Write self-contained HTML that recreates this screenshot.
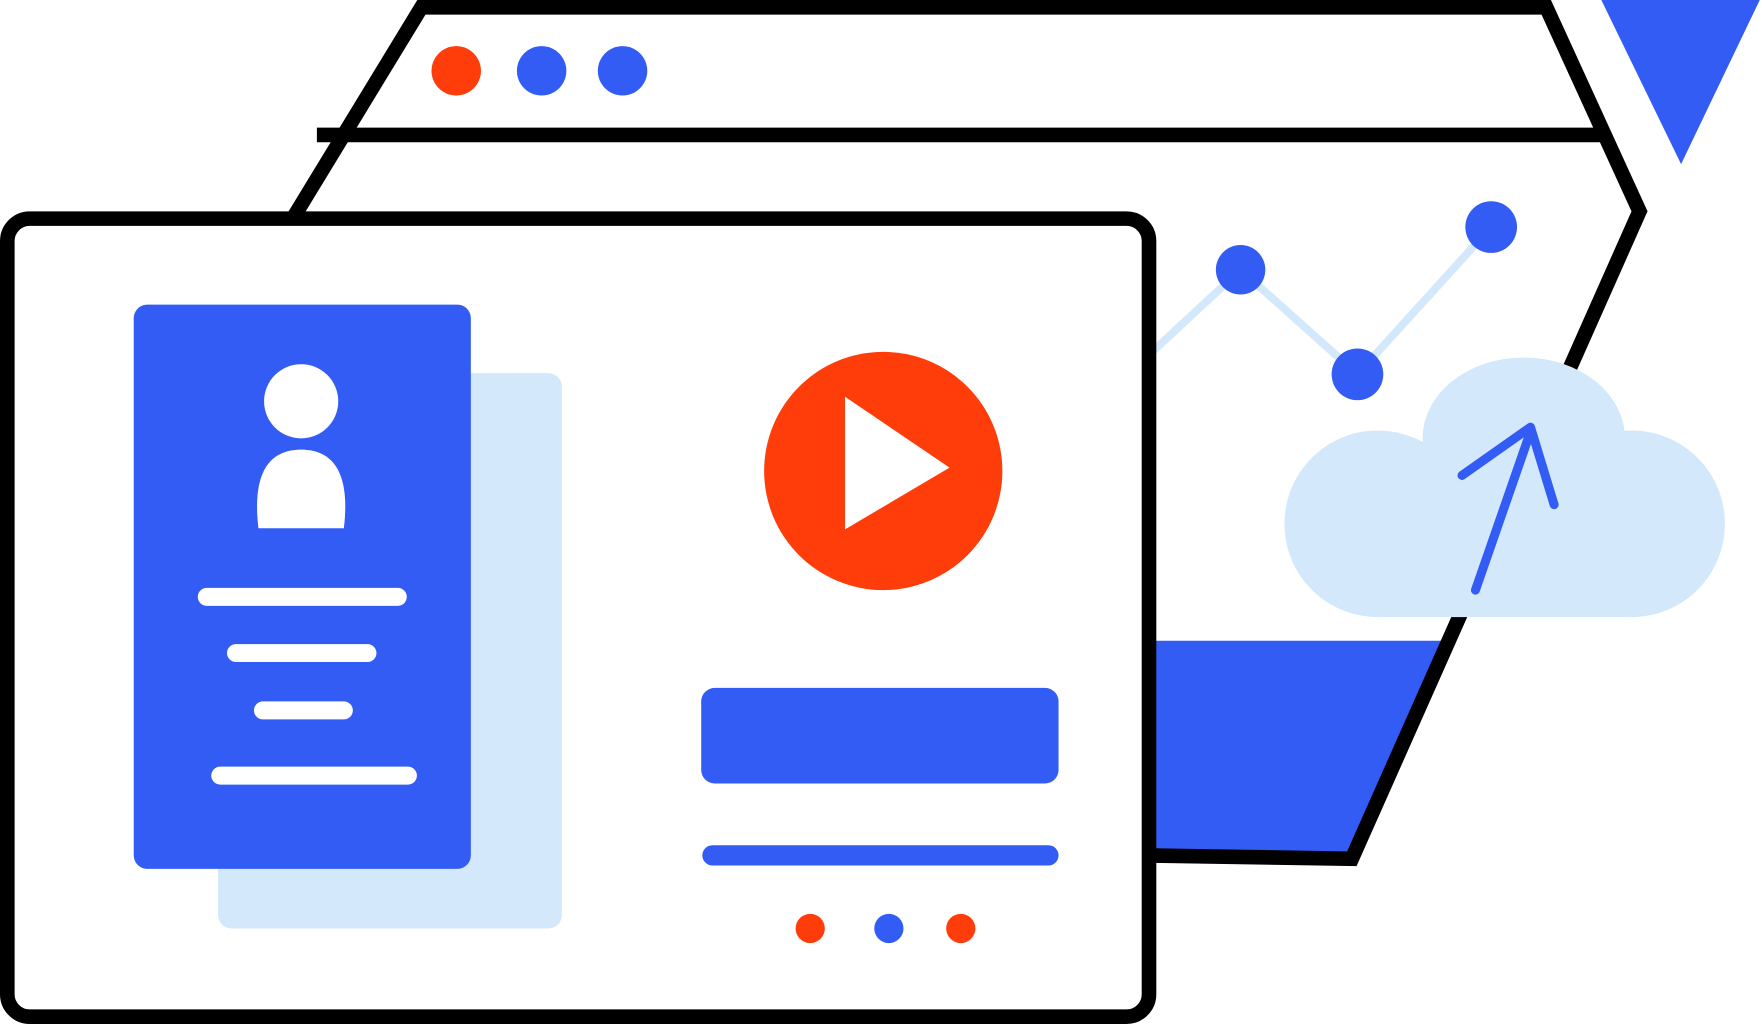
<!DOCTYPE html>
<html><head><style>html,body{margin:0;padding:0;background:#fff;overflow:hidden}svg{display:block}</style></head>
<body>
<svg width="1762" height="1024" viewBox="0 0 1568 911" preserveAspectRatio="none" xmlns="http://www.w3.org/2000/svg">
<polygon points="1425,0 1566,0 1496,146" fill="#335CF5"/>
<polygon points="1020,570 1285,570 1200,760 1020,758" fill="#335CF5"/>
<path d="M262 192 L375 6.5 L1376 6.5 L1459 188 L1203 764 L1020 761" fill="none" stroke="#000" stroke-width="13"/>
<line x1="282" y1="120" x2="1425" y2="120" stroke="#000" stroke-width="13"/>
<circle cx="406" cy="63" r="22" fill="#FF3D0A"/>
<circle cx="482" cy="63" r="22" fill="#335CF5"/>
<circle cx="554" cy="63" r="22" fill="#335CF5"/>
<polyline points="1020,318 1104,240 1208,333 1327,202" fill="none" stroke="#D4E8FB" stroke-width="7"/>
<circle cx="1104" cy="240" r="22" fill="#335CF5"/>
<circle cx="1208" cy="333" r="23" fill="#335CF5"/>
<circle cx="1327" cy="202" r="23" fill="#335CF5"/>
<g fill="#D4E8FB">
<ellipse cx="1356" cy="390" rx="90" ry="72"/>
<circle cx="1226" cy="466" r="83"/>
<circle cx="1452" cy="466" r="83"/>
<rect x="1226" y="400" width="226" height="149"/>
</g>
<g stroke="#335CF5" stroke-width="8" stroke-linecap="round" stroke-linejoin="round" fill="none">
<line x1="1313" y1="525" x2="1362" y2="384"/>
<polyline points="1301,423 1362,380 1383,449"/>
</g>
<rect x="6.5" y="194.5" width="1016" height="710" rx="20" fill="#fff" stroke="#000" stroke-width="13"/>
<rect x="194" y="332" width="306" height="494" rx="12" fill="#D4E8FB"/>
<rect x="119" y="271" width="300" height="502" rx="12" fill="#335CF5"/>
<circle cx="268" cy="357" r="33" fill="#fff"/>
<path d="M230 470 C224 420 240 400 268 400 C296 400 312 420 306 470 Z" fill="#fff"/>
<g stroke="#fff" stroke-width="16" stroke-linecap="round">
<line x1="184" y1="531" x2="354" y2="531"/>
<line x1="210" y1="581" x2="327" y2="581"/>
<line x1="234" y1="632" x2="306" y2="632"/>
<line x1="196" y1="690" x2="363" y2="690"/>
</g>
<circle cx="786" cy="419" r="106" fill="#FF3D0A"/>
<polygon points="752,353 845,416 752,471" fill="#fff"/>
<rect x="624" y="612" width="318" height="85" rx="12" fill="#335CF5"/>
<line x1="634" y1="761" x2="933" y2="761" stroke="#335CF5" stroke-width="18" stroke-linecap="round"/>
<circle cx="721" cy="826" r="13" fill="#FF3D0A"/>
<circle cx="791" cy="826" r="13" fill="#335CF5"/>
<circle cx="855" cy="826" r="13" fill="#FF3D0A"/>
</svg>
</body></html>
